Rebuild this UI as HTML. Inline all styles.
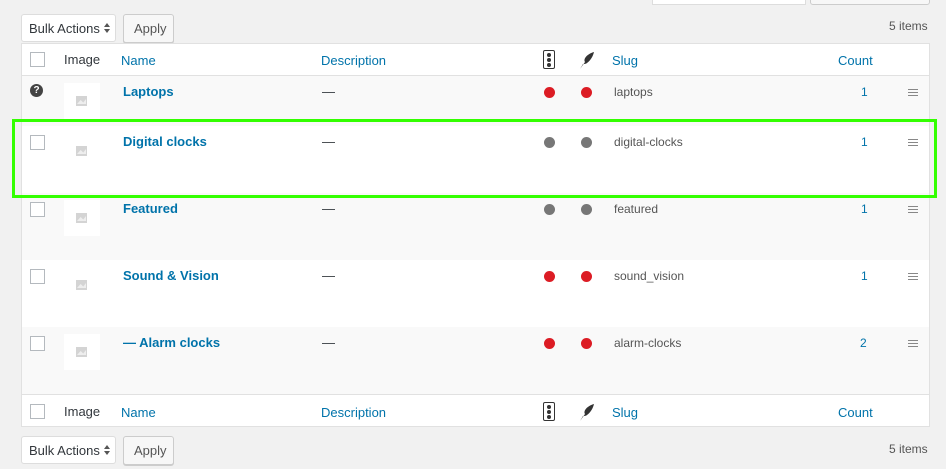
<!DOCTYPE html>
<html><head><meta charset="utf-8"><style>
*{box-sizing:border-box;margin:0;padding:0}
body{width:946px;height:469px;background:#f1f1f1;font-family:"Liberation Sans",sans-serif;font-size:13px;color:#32373c;position:relative;overflow:hidden}
.a{position:absolute}
.sel{position:absolute;left:21px;width:95px;height:28px;background:#fff;border:1px solid #ddd;border-radius:3px;padding:6px 0 0 7px;color:#32373c}
.sel:after{content:"";position:absolute;right:5px;top:8px;border:3px solid transparent;border-bottom:4px solid #555;border-top:0}
.sel:before{content:"";position:absolute;right:5px;top:14px;border:3px solid transparent;border-top:4px solid #555;border-bottom:0}
.btn{position:absolute;left:123px;width:51px;height:29px;background:#f7f7f7;border:1px solid #ccc;border-radius:3px;box-shadow:0 1px 0 #ccc;padding:6px 0 0 10px;color:#555}
.tbl{position:absolute;left:21px;width:909px;border:1px solid #e1e1e1;background:#fff}
.cb{position:absolute;width:15px;height:15px;border:1px solid #b4b9be;background:#fff;left:30px}
.row{position:absolute;left:22px;width:907px}
.lnk{color:#0073aa}
.b{font-weight:bold;color:#0073aa}
.dot{position:absolute;width:11px;height:11px;border-radius:50%}
.r{background:#dc1c24}.g{background:#777}
.th{position:absolute;width:36px;height:36px;left:64px;background:#fff}
.th i{position:absolute;left:12px;top:13px;width:11px;height:10px;background:#d4d4d4}
.th i:after{content:"";position:absolute;left:1px;top:3px;width:9px;height:5px;background:#eee;clip-path:polygon(0 100%,40% 20%,70% 70%,100% 0,100% 100%)}
.hm{position:absolute;left:908px;width:10px;height:7px;border-top:1px solid #888;border-bottom:1px solid #888}
.hm:after{content:"";position:absolute;left:0;top:2px;width:10px;height:1px;background:#888}
</style></head><body>
<div class="a" style="left:652px;top:-20px;width:154px;height:25px;background:#fff;border:1px solid #ddd"></div>
<div class="a" style="left:810px;top:-20px;width:120px;height:25px;background:#f7f7f7;border:1px solid #ccc;border-radius:3px"></div>
<div class="sel" style="top:14px">Bulk Actions</div><div class="btn" style="top:14px">Apply</div>
<div class="a" style="left:889px;top:19px;font-size:12px;color:#555">5 items</div>
<div class="tbl" style="top:43px;height:384px"></div>
<div class="row" style="top:44px;height:32px;border-bottom:1px solid #e1e1e1;background:#fff"></div>
<div class="row" style="top:76px;height:50px;background:#f9f9f9"></div>
<div class="row" style="top:126px;height:67px;background:#fff"></div>
<div class="row" style="top:193px;height:67px;background:#f9f9f9"></div>
<div class="row" style="top:260px;height:67px;background:#fff"></div>
<div class="row" style="top:327px;height:67px;background:#f9f9f9"></div>
<div class="row" style="top:394px;height:32px;border-top:1px solid #e1e1e1;background:#fff"></div>

<div class="cb" style="top:52px"></div>
<div class="a" style="left:64px;top:52px">Image</div>
<div class="a lnk" style="left:121px;top:53px">Name</div>
<div class="a lnk" style="left:321px;top:53px">Description</div>
<div class="a" style="left:543px;top:50px;width:12px;height:19px;border:1.5px solid #333;border-radius:2px"></div>
<div class="dot" style="left:547px;top:53px;width:4px;height:4px;background:#333"></div>
<div class="dot" style="left:547px;top:58px;width:4px;height:4px;background:#333"></div>
<div class="dot" style="left:547px;top:63px;width:4px;height:4px;background:#333"></div>
<svg class="a" style="left:579px;top:51px" width="16" height="18" viewBox="0 0 16 18"><path d="M1 18 L6 11 C4 8 8 3 15 1 C14 5 12 9 8 12 C7 13 5 13 4 13 Z" fill="#333"/></svg>
<div class="a lnk" style="left:612px;top:53px">Slug</div>
<div class="a lnk" style="left:838px;top:53px">Count</div>

<div class="a" style="left:30px;top:84px;width:13px;height:13px;border-radius:50%;background:#444;color:#fff;font-size:10px;font-weight:bold;text-align:center;line-height:13px">?</div>
<div class="th" style="top:83px"><i></i></div>
<div class="a b" style="left:123px;top:84px">Laptops</div>
<div class="a" style="left:322px;top:84px">—</div>
<div class="dot r" style="left:544px;top:87px"></div><div class="dot r" style="left:581px;top:87px"></div>
<div class="a" style="left:614px;top:85px;color:#555;font-size:12px">laptops</div>
<div class="a lnk" style="left:861px;top:85px;font-size:12px">1</div>
<div class="hm" style="top:89px"></div>

<div class="cb" style="top:135px"></div>
<div class="th" style="top:133px"><i></i></div>
<div class="a b" style="left:123px;top:134px">Digital clocks</div>
<div class="a" style="left:322px;top:134px">—</div>
<div class="dot g" style="left:544px;top:137px"></div><div class="dot g" style="left:581px;top:137px"></div>
<div class="a" style="left:614px;top:135px;color:#555;font-size:12px">digital-clocks</div>
<div class="a lnk" style="left:861px;top:135px;font-size:12px">1</div>
<div class="hm" style="top:139px"></div>

<div class="cb" style="top:202px"></div>
<div class="th" style="top:200px"><i></i></div>
<div class="a b" style="left:123px;top:201px">Featured</div>
<div class="a" style="left:322px;top:201px">—</div>
<div class="dot g" style="left:544px;top:204px"></div><div class="dot g" style="left:581px;top:204px"></div>
<div class="a" style="left:614px;top:202px;color:#555;font-size:12px">featured</div>
<div class="a lnk" style="left:861px;top:202px;font-size:12px">1</div>
<div class="hm" style="top:206px"></div>

<div class="cb" style="top:269px"></div>
<div class="th" style="top:267px"><i></i></div>
<div class="a b" style="left:123px;top:268px">Sound &amp; Vision</div>
<div class="a" style="left:322px;top:268px">—</div>
<div class="dot r" style="left:544px;top:271px"></div><div class="dot r" style="left:581px;top:271px"></div>
<div class="a" style="left:614px;top:269px;color:#555;font-size:12px">sound_vision</div>
<div class="a lnk" style="left:861px;top:269px;font-size:12px">1</div>
<div class="hm" style="top:273px"></div>

<div class="cb" style="top:336px"></div>
<div class="th" style="top:334px"><i></i></div>
<div class="a b" style="left:123px;top:335px">— Alarm clocks</div>
<div class="a" style="left:322px;top:335px">—</div>
<div class="dot r" style="left:544px;top:338px"></div><div class="dot r" style="left:581px;top:338px"></div>
<div class="a" style="left:614px;top:336px;color:#555;font-size:12px">alarm-clocks</div>
<div class="a lnk" style="left:860px;top:336px;font-size:12px">2</div>
<div class="hm" style="top:340px"></div>

<div class="cb" style="top:404px"></div>
<div class="a" style="left:64px;top:404px">Image</div>
<div class="a lnk" style="left:121px;top:405px">Name</div>
<div class="a lnk" style="left:321px;top:405px">Description</div>
<div class="a" style="left:543px;top:402px;width:12px;height:19px;border:1.5px solid #333;border-radius:2px"></div>
<div class="dot" style="left:547px;top:405px;width:4px;height:4px;background:#333"></div>
<div class="dot" style="left:547px;top:410px;width:4px;height:4px;background:#333"></div>
<div class="dot" style="left:547px;top:415px;width:4px;height:4px;background:#333"></div>
<svg class="a" style="left:579px;top:403px" width="16" height="18" viewBox="0 0 16 18"><path d="M1 18 L6 11 C4 8 8 3 15 1 C14 5 12 9 8 12 C7 13 5 13 4 13 Z" fill="#333"/></svg>
<div class="a lnk" style="left:612px;top:405px">Slug</div>
<div class="a lnk" style="left:838px;top:405px">Count</div>

<div class="sel" style="top:436px">Bulk Actions</div><div class="btn" style="top:436px">Apply</div>
<div class="a" style="left:889px;top:442px;font-size:12px;color:#555">5 items</div>

<div class="a" style="left:12px;top:119px;width:925px;height:79px;border:3px solid #33ff00"></div>
</body></html>
